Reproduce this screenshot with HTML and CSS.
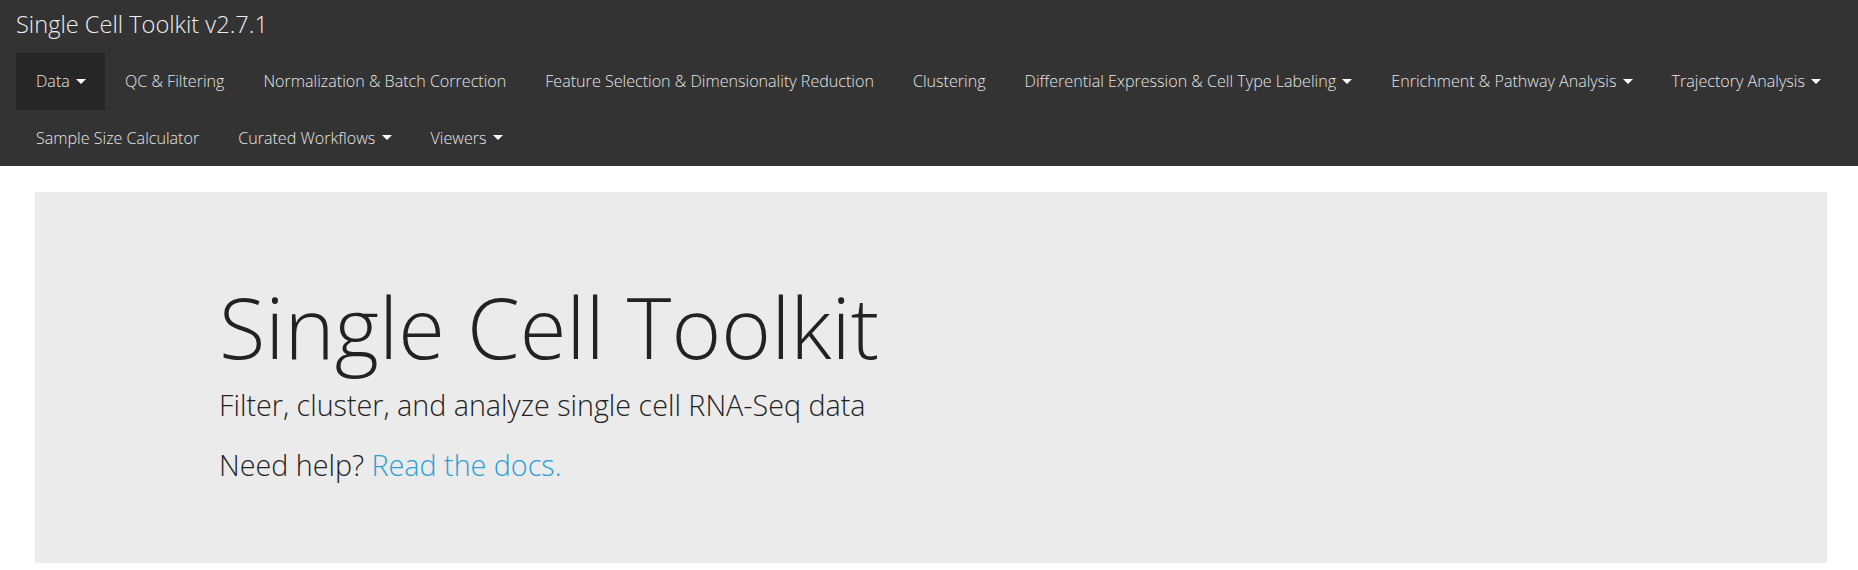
FILE: index.html
```html
<!DOCTYPE html>
<html lang="en">
<head>
<meta charset="utf-8">
<title>Single Cell Toolkit</title>
<link rel="stylesheet" href="styles.css">
</head>
<body>
<nav class="navbar">
  <div class="brand">Single Cell Toolkit v2.7.1</div>
  <ul class="nav">
    <li class="item active">Data <span class="caret"></span></li>
    <li class="item">QC &amp; Filtering</li>
    <li class="item">Normalization &amp; Batch Correction</li>
    <li class="item">Feature Selection &amp; Dimensionality Reduction</li>
    <li class="item">Clustering</li>
    <li class="item">Differential Expression &amp; Cell Type Labeling <span class="caret"></span></li>
    <li class="item">Enrichment &amp; Pathway Analysis <span class="caret"></span></li>
    <li class="item">Trajectory Analysis <span class="caret"></span></li>
    <li class="item">Sample Size Calculator</li>
    <li class="item">Curated Workflows <span class="caret"></span></li>
    <li class="item">Viewers <span class="caret"></span></li>
  </ul>
</nav>
<main class="page">
  <section class="jumbotron">
    <h1 class="title">Single Cell Toolkit</h1>
    <p class="lead sub">Filter, cluster, and analyze single cell RNA-Seq data</p>
    <p class="lead">Need help? <a class="link" href="#">Read the docs.</a></p>
  </section>
</main>
</body>
</html>
```
FILE: styles.css
```css
html, body {
  margin: 0;
  padding: 0;
  background: #fff;
  font-family: "Open Sans", "Noto Sans", sans-serif;
  font-weight: 300;
  color: #222;
}

.navbar {
  background: #333;
  padding: 0 0 0 16px;
  height: 166px;
  box-sizing: border-box;
}

.brand {
  height: 53px;
  line-height: 48px;
  font-size: 23.6px;
  color: #eee;
  font-weight: 300;
}

.nav {
  list-style: none;
  margin: 0;
  padding: 0;
  display: flex;
  flex-wrap: wrap;
}

.item {
  height: 56.5px;
  display: flex;
  align-items: center;
  padding: 0 19px 0 20px;
  font-size: 16.1px;
  font-weight: 300;
  color: #e6e6e6;
  white-space: pre;
}

.item.active {
  background: #262626;
}

.caret {
  display: inline-block;
  width: 0;
  height: 0;
  margin-left: 2px;
  border-top: 5px solid #fff;
  border-left: 5px solid transparent;
  border-right: 5px solid transparent;
  vertical-align: middle;
}

.page {
  padding: 26px 31px 0 35px;
}

.jumbotron {
  background: #ebebeb;
  height: 371px;
  box-sizing: border-box;
  padding: 83px 0 0 184px;
}

.title {
  margin: 0;
  font-size: 85px;
  font-weight: 300;
  line-height: 1.2;
  color: #222;
}

.lead {
  margin: 0 0 17px;
  font-size: 28.7px;
  font-weight: 300;
  line-height: 1.5;
  color: #222;
}

.sub {
  margin-top: 6px;
}

.link {
  color: #2a9fd6;
  text-decoration: none;
}
```
